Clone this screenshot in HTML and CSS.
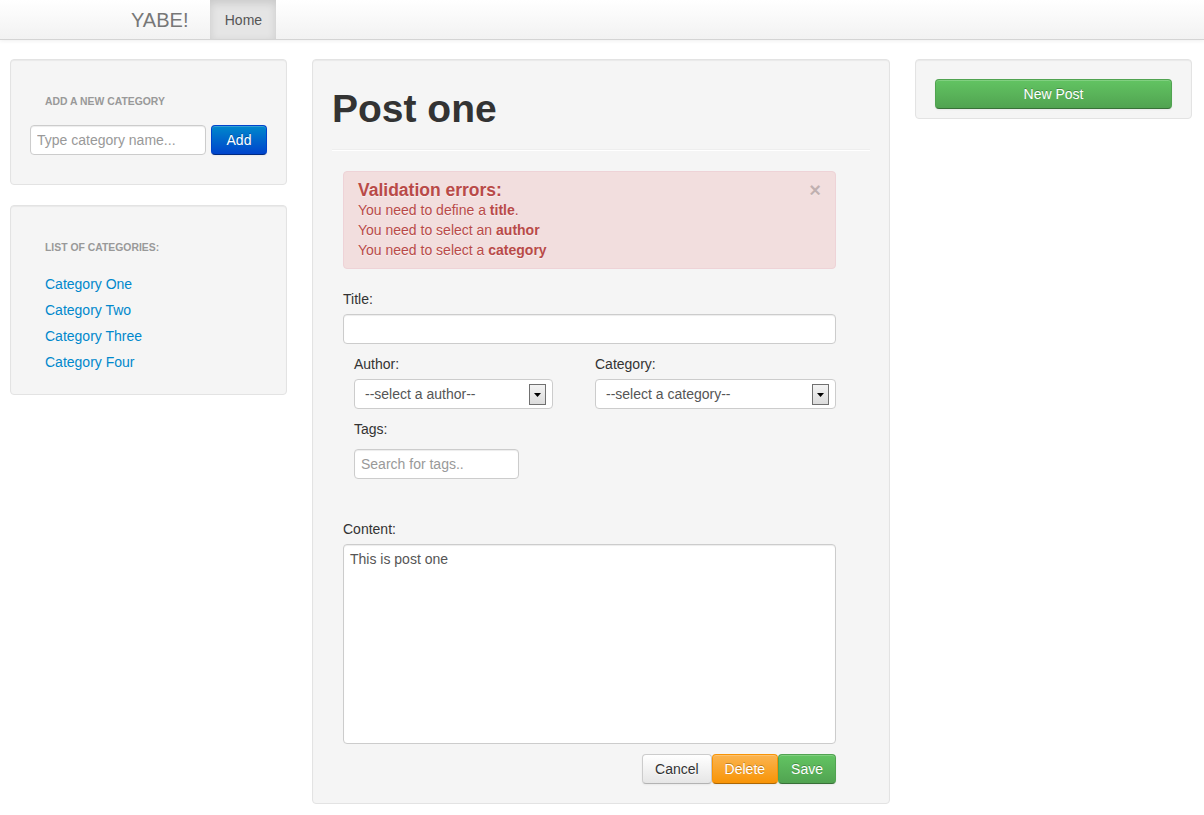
FILE: index.html
```html
<!DOCTYPE html>
<html>
<head>
<meta charset="utf-8">
<title>YABE!</title>
<link rel="stylesheet" href="styles.css">
</head>
<body>
<div class="navbar">
  <div class="navbar-inner">
    <a class="brand" href="#">YABE!</a>
    <a class="nav-tab" href="#">Home</a>
  </div>
</div>

<div class="layout">
  <aside class="sidebar">
    <div class="well">
      <div class="nav-header">Add a new category</div>
      <form class="add-form">
        <input class="text-input cat-input" type="text" placeholder="Type category name...">
        <button class="btn btn-primary add-btn" type="button">Add</button>
      </form>
    </div>
    <div class="well">
      <div class="nav-header">List of categories:</div>
      <ul class="cat-list">
        <li><a href="#">Category One</a></li>
        <li><a href="#">Category Two</a></li>
        <li><a href="#">Category Three</a></li>
        <li><a href="#">Category Four</a></li>
      </ul>
    </div>
  </aside>

  <main class="well main">
    <h1 class="post-title">Post one</h1>
    <hr class="divider">
    <form class="post-form">
      <div class="alert">
        <span class="close">×</span>
        <h4 class="alert-heading">Validation errors:</h4>
        <div>You need to define a <b>title</b>.</div>
        <div>You need to select an <b>author</b></div>
        <div>You need to select a <b>category</b></div>
      </div>

      <label class="field-label">Title:</label>
      <input class="text-input title-input" type="text">

      <div class="two-cols">
        <div class="col">
          <label class="field-label">Author:</label>
          <div class="select-wrap author-select">
            <select class="select"><option>--select a author--</option></select>
            <span class="arrow"><svg width="7" height="4" viewBox="0 0 7 4"><polygon points="0,0 7,0 3.5,4" fill="#000"/></svg></span>
          </div>
        </div>
        <div class="col">
          <label class="field-label">Category:</label>
          <div class="select-wrap cat-select">
            <select class="select"><option>--select a category--</option></select>
            <span class="arrow"><svg width="7" height="4" viewBox="0 0 7 4"><polygon points="0,0 7,0 3.5,4" fill="#000"/></svg></span>
          </div>
        </div>
      </div>

      <div class="tags">
        <label class="field-label tags-label">Tags:</label>
        <input class="text-input tags-input" type="text" placeholder="Search for tags..">
      </div>

      <label class="field-label">Content:</label>
      <textarea class="text-input content-area">This is post one</textarea>

      <div class="actions">
        <button class="btn btn-default" type="button">Cancel</button>
        <button class="btn btn-warning" type="button">Delete</button>
        <button class="btn btn-success" type="button">Save</button>
      </div>
    </form>
  </main>

  <aside class="well right-panel">
    <button class="btn btn-success new-post" type="button">New Post</button>
  </aside>
</div>
</body>
</html>
```

FILE: styles.css
```css
* { box-sizing: border-box; }

body {
  margin: 0;
  font-family: "Liberation Sans", Arial, sans-serif;
  font-size: 14px;
  line-height: 20px;
  color: #333;
  background: #fff;
}

.navbar {
  height: 40px;
  border-bottom: 1px solid #d4d4d4;
  background: linear-gradient(#ffffff, #f2f2f2);
  box-shadow: 0 1px 4px rgba(0, 0, 0, 0.065);
}

.navbar-inner {
  width: 940px;
  margin: 0 auto;
  display: flex;
}

.brand {
  margin-left: -21px;
  padding: 10px 20px 9px;
  font-size: 20px;
  line-height: 20px;
  color: #777;
  text-decoration: none;
}

.nav-tab {
  width: 66px;
  margin-left: 2px;
  padding: 10px 0 9px;
  text-align: center;
  color: #555;
  text-decoration: none;
  background: #e5e5e5;
  box-shadow: inset 0 3px 8px rgba(0, 0, 0, 0.125);
}

.layout {
  display: grid;
  grid-template-columns: 277px 578px 277px;
  column-gap: 25px;
  margin: 19px 0 0 10px;
  align-items: start;
}

.well {
  background: #f5f5f5;
  border: 1px solid #e3e3e3;
  border-radius: 4px;
  box-shadow: inset 0 1px 1px rgba(0, 0, 0, 0.05);
  padding: 19px;
  margin-bottom: 20px;
}

.nav-header {
  margin-top: 10px;
  padding: 3px 15px;
  font-size: 10.4px;
  font-weight: bold;
  line-height: 20px;
  color: #999;
  text-transform: uppercase;
}

.add-form {
  display: flex;
  gap: 6px;
  margin: 10px 0;
}

.text-input {
  display: block;
  height: 30px;
  padding: 4px 6px;
  font-family: "Liberation Sans", Arial, sans-serif;
  font-size: 14px;
  line-height: 20px;
  color: #555;
  background: #fff;
  border: 1px solid #ccc;
  border-radius: 4px;
  box-shadow: inset 0 1px 1px rgba(0, 0, 0, 0.075);
  outline: none;
}

.text-input::placeholder { color: #999; }

.cat-input { width: 176px; }

.btn {
  display: inline-block;
  height: 30px;
  padding: 4px 12px;
  font-family: "Liberation Sans", Arial, sans-serif;
  font-size: 14px;
  line-height: 20px;
  text-align: center;
  border: 1px solid rgba(0, 0, 0, 0.1);
  border-bottom-color: rgba(0, 0, 0, 0.25);
  border-radius: 4px;
  box-shadow: inset 0 1px 0 rgba(255, 255, 255, 0.2), 0 1px 2px rgba(0, 0, 0, 0.05);
  cursor: pointer;
}

.btn-primary {
  color: #fff;
  text-shadow: 0 -1px 0 rgba(0, 0, 0, 0.25);
  background: linear-gradient(#0088cc, #0044cc);
  border-color: #0044cc #0044cc #002a80;
}

.add-btn { width: 56px; padding: 4px 0; margin-left: -1px; }

.btn-success {
  color: #fff;
  text-shadow: 0 -1px 0 rgba(0, 0, 0, 0.25);
  background: linear-gradient(#62c462, #51a351);
  border-color: #51a351 #51a351 #387038;
}

.btn-warning {
  color: #fff;
  text-shadow: 0 -1px 0 rgba(0, 0, 0, 0.25);
  background: linear-gradient(#fbb450, #f89406);
  border-color: #f89406 #f89406 #ad6704;
}

.btn-default {
  color: #333;
  text-shadow: 0 1px 1px rgba(255, 255, 255, 0.75);
  background: linear-gradient(#ffffff, #e6e6e6);
  border-color: #ccc #ccc #b3b3b3;
}

.cat-list {
  list-style: none;
  margin: 10px 0 0;
  padding: 0;
}

.cat-list a {
  display: block;
  padding: 3px 15px;
  color: #0088cc;
  text-decoration: none;
}

.main {
  padding-bottom: 19px;
}

.post-title {
  margin: 10px 0;
  font-size: 39px;
  line-height: 40px;
  font-weight: bold;
  color: #333;
  text-rendering: optimizeLegibility;
}

.divider {
  margin: 20px 0;
  border: 0;
  border-top: 1px solid #eeeeee;
  border-bottom: 1px solid #ffffff;
}

.post-form {
  margin-left: 11px;
  width: 493px;
}

.alert {
  position: relative;
  margin-bottom: 20px;
  padding: 8px 35px 8px 14px;
  color: #b94a48;
  background: #f2dede;
  border: 1px solid #eed3d7;
  border-radius: 4px;
  text-shadow: 0 1px 0 rgba(255, 255, 255, 0.5);
}

.alert-heading {
  margin: 0;
  font-size: 17.5px;
  line-height: 20px;
  font-weight: bold;
  color: #b94a48;
}

.close {
  position: absolute;
  top: 8px;
  right: 14px;
  font-size: 20px;
  font-weight: bold;
  line-height: 20px;
  color: #000;
  opacity: 0.2;
  text-shadow: 0 1px 0 #fff;
}

.field-label {
  display: block;
  margin-bottom: 5px;
}

.title-input {
  width: 100%;
  margin-bottom: 10px;
}

.two-cols {
  display: grid;
  grid-template-columns: 241px 241px;
  margin-left: 11px;
}

.select-wrap {
  position: relative;
  margin-bottom: 10px;
}

.author-select { width: 199px; }
.cat-select { width: 241px; }

.select {
  display: block;
  width: 100%;
  height: 30px;
  padding: 4px 30px 4px 10px;
  font-family: "Liberation Sans", Arial, sans-serif;
  font-size: 14px;
  color: #555;
  background: #fff;
  border: 1px solid #ccc;
  border-radius: 4px;
  -webkit-appearance: none;
  appearance: none;
  outline: none;
}

.arrow {
  position: absolute;
  top: 5px;
  right: 7px;
  width: 17px;
  height: 21px;
  display: flex;
  align-items: center;
  justify-content: center;
  border: 1px solid #707070;
  background: linear-gradient(#f3f3f3, #dcdcdc);
  pointer-events: none;
}

.tags {
  margin-left: 11px;
  margin-bottom: 40px;
}

.tags-label { margin-bottom: 10px; }

.tags-input { width: 165px; }

.content-area {
  width: 100%;
  height: 200px;
  resize: none;
}

.actions {
  display: flex;
  justify-content: flex-end;
  margin-top: 10px;
}

.right-panel {
  padding-bottom: 9px;
}

.new-post {
  display: block;
  width: 100%;
}
```
